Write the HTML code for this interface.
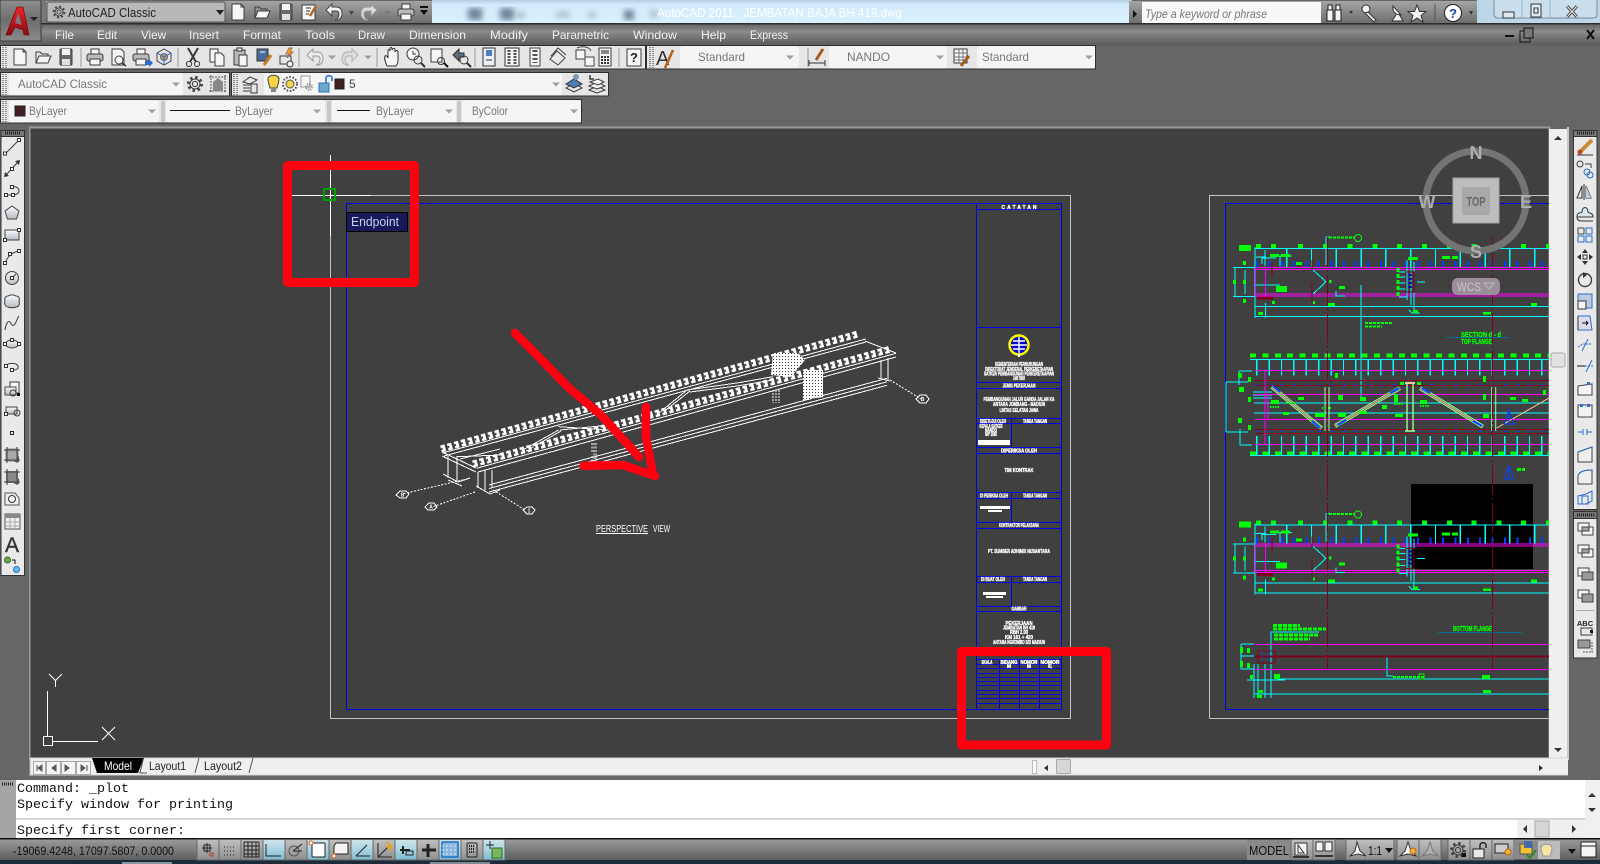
<!DOCTYPE html>
<html><head><meta charset="utf-8"><title>AutoCAD 2011</title>
<style>
html,body{margin:0;padding:0;background:#666;width:1600px;height:864px;overflow:hidden}
svg{display:block}
text{font-family:"Liberation Sans",sans-serif}
.m{fill:#f0f0f0;font-size:12px}
.g{fill:#777;font-size:12px}
.c{font-family:"Liberation Mono",monospace;font-size:13.33px;fill:#111}
.t{fill:#fff;font-size:5px;font-weight:bold;text-anchor:middle;stroke:#fff;stroke-width:.35}
.i{fill:none;stroke:#3c3c3c;stroke-width:1}
.f{fill:#f6f6f6}
.cy{stroke:#0ff;fill:none}.mg{stroke:#f0f;fill:none}.dr{stroke:#800020;fill:none}.gn{stroke:#0f0;fill:none}
.gf{fill:#0f0}
.w{stroke:#fff;fill:none}
.gt{fill:#0f0;font-size:7px;font-weight:bold;stroke:#0f0;stroke-width:.3}
</style></head><body>
<svg width="1600" height="864" viewBox="0 0 1600 864" xmlns="http://www.w3.org/2000/svg">
<defs>
<linearGradient id="gb" x1="0" y1="0" x2="0" y2="1"><stop offset="0" stop-color="#a4a4a4"/><stop offset="1" stop-color="#6e6e6e"/></linearGradient>
<linearGradient id="menu" x1="0" y1="0" x2="0" y2="1"><stop offset="0" stop-color="#666"/><stop offset=".35" stop-color="#8c8c8c"/><stop offset=".6" stop-color="#777"/><stop offset="1" stop-color="#5c5c5c"/></linearGradient>
<linearGradient id="tit" x1="0" y1="0" x2="0" y2="1"><stop offset="0" stop-color="#b4cde0"/><stop offset=".2" stop-color="#d2ebfb"/><stop offset="1" stop-color="#d9f1fd"/></linearGradient>
<linearGradient id="st" x1="0" y1="0" x2="0" y2="1"><stop offset="0" stop-color="#9a9a9a"/><stop offset="1" stop-color="#5e5e5e"/></linearGradient>
<linearGradient id="on" x1="0" y1="0" x2="0" y2="1"><stop offset="0" stop-color="#cfe3ea"/><stop offset=".5" stop-color="#a9d3e1"/><stop offset="1" stop-color="#7db9cf"/></linearGradient>
<linearGradient id="off" x1="0" y1="0" x2="0" y2="1"><stop offset="0" stop-color="#c0c0c0"/><stop offset="1" stop-color="#8e8e8e"/></linearGradient>
<linearGradient id="ab" x1="0" y1="0" x2="0" y2="1"><stop offset="0" stop-color="#8e8e8e"/><stop offset=".5" stop-color="#6e6e6e"/><stop offset="1" stop-color="#8a8a8a"/></linearGradient>
<linearGradient id="rd" x1="0" y1="0" x2="0" y2="1"><stop offset="0" stop-color="#e8242c"/><stop offset="1" stop-color="#8e0a12"/></linearGradient>
<linearGradient id="bx" x1="0" y1="0" x2="0" y2="1"><stop offset="0" stop-color="#fafafa"/><stop offset="1" stop-color="#b4bcc4"/></linearGradient>
<pattern id="dots" width="3" height="3" patternUnits="userSpaceOnUse"><rect width="3" height="3" fill="#fff"/><rect x="2" y="2" width="1" height="1" fill="#404040"/></pattern>
<filter id="bl"><feGaussianBlur stdDeviation="3"/></filter>
<g id="new"><path class="i f" d="M-6-8H3L6-5V8H-6Z"/><path class="i" d="M3-8V-5H6"/></g>
<g id="open"><path class="i" d="M-7 6V-5H-3L-1-3H5V-1"/><path class="i f" d="M-7 6L-4-1H8L5 6Z"/></g>
<g id="save"><rect class="i" x="-6" y="-8" width="12" height="16" rx="1" style="fill:#6a6a6a"/><rect x="-4" y="-8" width="8" height="6" fill="#f4f4f4"/><rect x="-4" y="2" width="8" height="6" fill="#e0e0e0"/></g>
<g id="prn"><path class="i f" d="M-4-3V-8H4V-3"/><rect class="i" x="-8" y="-3" width="16" height="7" rx="2" style="fill:#bbb"/><path class="i f" d="M-5 2H5V8H-5Z"/></g>
<g id="undo"><path d="M-8-2L-2-8V-5H2C7-5 8-1 8 2C8 5 6 7 4 8H1C4 7 5 5 5 2C5 0 4-1 2-1H-2V4Z" fill="#f4f4f4" stroke="#444"/></g>
<g id="redo"><path d="M8-2L2-8V-5H-2C-7-5-8-1-8 2C-8 5-6 7-4 8H-1C-4 7-5 5-5 2C-5 0-4-1-2-1H2V4Z" fill="#dcdcdc" stroke="#999"/></g>
<g id="gear"><circle r="6.5" fill="none" stroke="#444" stroke-width="3" stroke-dasharray="2.4 2.7"/><circle r="5" class="i"/><circle r="2.6" class="i"/></g>
<g id="dot"><rect x="-1.5" y="-1.5" width="3" height="3" fill="#fff" stroke="#333"/></g>
<path id="gdn" d="M-4-1.5H4L0 2.5Z" fill="#a0a0a0"/>
<g id="flange">
<path class="cy" d="M1255 248.5H1549M1255 306.5H1549M1255 316.5H1549M1233 267.5H1255M1233 296.5H1255M1235 267V297M1245 270V294M1255 247V318M1265.5 303V318M1254 285H1280"/>
<path class="cy" stroke-width="19" stroke-dasharray="1.4 23.4" d="M1286 258H1549"/>
<path class="cy" d="M1255 248V267M1265 250V266M1262 264V258H1276M1280 266V256M1287 266V256M1256 257H1266M1277 256H1292M1326 237V265M1326 237H1332"/>
<path class="gn" stroke-width="4" stroke-dasharray="5 19.8" d="M1298 246H1549"/>
<path class="gn" stroke-width="4" d="M1256 246H1261M1271 246H1276"/>
<path d="M1256 264H1549" stroke="#0040ff" stroke-width="6" stroke-dasharray="2 10.4" fill="none"/>
<path class="mg" d="M1255 267.5H1549M1255 269.5H1549M1255 294H1549M1255 296H1549M1255.5 267V297M1265.5 267V296"/>
<path class="cy" d="M1313 270L1326 281.7L1313 294M1336 291V296H1345M1407 260V300M1411 260V305M1414 262V310M1409 310L1412 313H1420M1399 297H1407M1399 272H1407M1399 277H1407M1399 283H1407M1399 289H1407M1417 282H1425"/>
<path class="dr" d="M1272 262V275M1312 260V270M1312 283V302M1406 272H1414V292H1406Z"/>
<path d="M1257 298H1273" stroke="#800020" stroke-width="3"/>
<path class="gn" stroke-width="3" stroke-dasharray="4 2" d="M1398 268V296"/>
<path d="M1410 274V290" stroke="#00c" stroke-width="3" stroke-dasharray="2 2"/>
<g class="gf"><rect x="1239" y="245" width="12" height="6"/><rect x="1276" y="286" width="11" height="6"/><rect x="1328" y="303" width="7" height="3"/><rect x="1531" y="303" width="6" height="3"/><rect x="1483" y="312" width="8" height="2.5"/><rect x="1258" y="312" width="5" height="3"/><rect x="1413" y="310" width="5" height="3"/><rect x="1233" y="280" width="3" height="4"/><rect x="1243" y="280" width="3" height="4"/><rect x="1243" y="261" width="3" height="4"/><rect x="1243" y="299" width="3" height="4"/><rect x="1329" y="280" width="2.5" height="3"/><rect x="1272" y="301" width="3" height="3"/><rect x="1313" y="301" width="2" height="3"/><rect x="1339" y="286" width="6" height="3"/><rect x="1408" y="257" width="10" height="3"/><rect x="1442" y="256" width="8" height="3"/><rect x="1452" y="256" width="6" height="3"/><rect x="1270" y="254" width="9" height="3"/><rect x="1281" y="254" width="9" height="3"/><rect x="1296" y="262" width="6" height="3"/></g>
</g>
</defs>

<rect width="1600" height="864" fill="#666"/>

<!-- title bar -->
<rect x="432" y="0" width="700" height="23" fill="url(#tit)"/>
<g filter="url(#bl)" fill="#6f8399">
<rect x="468" y="8" width="14" height="12"/><rect x="500" y="8" width="14" height="12"/><rect x="518" y="12" width="6" height="6" opacity=".6"/><rect x="556" y="12" width="14" height="5" opacity=".5"/><rect x="588" y="13" width="8" height="4" opacity=".6"/><rect x="624" y="10" width="10" height="10"/><rect x="650" y="10" width="8" height="8" opacity=".4"/>
</g>
<text x="657" y="17" fill="#fff" font-size="13" textLength="245" lengthAdjust="spacingAndGlyphs" xml:space="preserve">AutoCAD 2011   JEMBATAN BAJA BH 419.dwg</text>
<rect x="0" y="0" width="46" height="23" fill="#777"/>
<rect x="46" y="1" width="386" height="22" fill="url(#gb)"/>
<rect x="47" y="2" width="178" height="20" rx="2" fill="#b8b8b8" stroke="#555"/>
<use href="#gear" transform="translate(59 12) scale(.8)"/>
<text x="68" y="17" fill="#222" font-size="12.5" textLength="88" lengthAdjust="spacingAndGlyphs">AutoCAD Classic</text>
<path d="M216 10H224L220 15Z" fill="#222"/>
<use href="#new" x="238" y="12"/><use href="#open" x="262" y="12"/><use href="#save" x="286" y="12"/>
<g transform="translate(309 12)"><rect class="i f" x="-7" y="-7" width="13" height="15"/><path d="M-3-4H2M-3-1H1M-3 2H0" stroke="#333"/><path d="M1 4L7-6" stroke="#b5651d" stroke-width="2.4"/></g>
<use href="#undo" x="334" y="12"/><path d="M349 11H354L351.5 15Z" fill="#444"/>
<use href="#redo" x="369" y="12"/><path d="M385 11H390L387.5 15Z" fill="#777"/>
<use href="#prn" x="406" y="12"/>
<path d="M420 6H428V8H420ZM420 10H428L424 15Z" fill="#111"/>

<!-- search -->
<rect x="1129" y="1" width="348" height="22" fill="url(#gb)"/>
<path d="M1133 10L1137 14L1133 18Z" fill="#111"/>
<rect x="1142" y="2" width="179" height="21" fill="#f8f8f8"/>
<text x="1145" y="18" fill="#777" font-size="12" font-style="italic" textLength="122" lengthAdjust="spacingAndGlyphs">Type a keyword or phrase</text>
<g fill="#f4f4f4" stroke="#222"><rect x="1327" y="10" width="6" height="11"/><rect x="1335" y="10" width="6" height="11"/><rect x="1328" y="5" width="4" height="5"/><rect x="1336" y="5" width="4" height="5"/></g>
<path d="M1349 11H1353L1351 14Z" fill="#333"/>
<g fill="#f2f2f2" stroke="#333"><circle cx="1366" cy="9" r="4"/><path d="M1368 12L1376 20L1374 22L1365 13Z"/><path d="M1393 6C1392 12 1396 15 1401 15L1393 6ZM1396 15L1392 21H1403L1399 14"/><path d="M1417 5L1419.5 11.5L1426 11.5L1421 15.5L1423 22L1417 18L1411 22L1413 15.5L1408 11.5L1414.5 11.5Z"/></g>
<path d="M1435 4V22" stroke="#555"/>
<circle cx="1453" cy="13" r="8.5" fill="#fff" stroke="#222"/>
<text x="1453" y="18" text-anchor="middle" font-size="13" font-weight="bold" fill="#1a3fae">?</text>
<path d="M1469 11H1473L1471 15Z" fill="#333"/>
<!-- window buttons -->
<rect x="1477" y="0" width="123" height="23" fill="#bcd7e8"/>
<path d="M1494 0V14Q1494 18 1498 18H1593Q1597 18 1597 14V0" fill="#c9dfee" stroke="#7a8a9a"/>
<path d="M1522 0V18M1550 0V18" stroke="#9fb2c2"/>
<rect x="1503" y="12" width="11" height="6" fill="#dfeaf2" stroke="#333"/>
<rect x="1531" y="4" width="10" height="13" fill="#dfeaf2" stroke="#333"/><rect x="1534" y="8" width="4" height="5" fill="none" stroke="#333"/>
<path d="M1567 6L1577 17M1577 6L1567 17" stroke="#444" stroke-width="3"/><path d="M1567 6L1577 17M1577 6L1567 17" stroke="#eee" stroke-width="1"/>

<!-- menu bar -->
<rect x="0" y="23" width="1600" height="1.5" fill="#2d2d2d"/>
<rect x="0" y="24.5" width="1600" height="20.5" fill="url(#menu)"/>
<text class="m" x="55" y="39" textLength="19" lengthAdjust="spacingAndGlyphs">File</text>
<text class="m" x="97" y="39" textLength="20" lengthAdjust="spacingAndGlyphs">Edit</text>
<text class="m" x="141" y="39" textLength="25" lengthAdjust="spacingAndGlyphs">View</text>
<text class="m" x="189" y="39" textLength="30" lengthAdjust="spacingAndGlyphs">Insert</text>
<text class="m" x="243" y="39" textLength="38" lengthAdjust="spacingAndGlyphs">Format</text>
<text class="m" x="305" y="39" textLength="30" lengthAdjust="spacingAndGlyphs">Tools</text>
<text class="m" x="358" y="39" textLength="27" lengthAdjust="spacingAndGlyphs">Draw</text>
<text class="m" x="409" y="39" textLength="57" lengthAdjust="spacingAndGlyphs">Dimension</text>
<text class="m" x="490" y="39" textLength="38" lengthAdjust="spacingAndGlyphs">Modify</text>
<text class="m" x="552" y="39" textLength="57" lengthAdjust="spacingAndGlyphs">Parametric</text>
<text class="m" x="633" y="39" textLength="44" lengthAdjust="spacingAndGlyphs">Window</text>
<text class="m" x="701" y="39" textLength="25" lengthAdjust="spacingAndGlyphs">Help</text>
<text class="m" x="750" y="39" textLength="38" lengthAdjust="spacingAndGlyphs">Express</text>
<rect x="1505" y="35" width="9" height="2" fill="#111"/>
<rect x="1520" y="31" width="10" height="11" fill="none" stroke="#111"/><rect x="1524" y="28" width="9" height="10" fill="#777" stroke="#111"/>
<path d="M1587 30L1594 39M1594 30L1587 39" stroke="#111" stroke-width="2"/>

<!-- app button -->
<rect x="0" y="0" width="41" height="41" fill="url(#ab)" stroke="#3a3a3a"/>
<path d="M6 35L17 7H23L29 35H24L23 30L15 27L11 35Z" fill="url(#rd)" stroke="#6d0000" stroke-width=".6"/>
<path d="M18 13L22 25L15 23Z" fill="#7a7a7a"/>
<path d="M30 17H38L34 21Z" fill="#222"/>

<!-- toolbar row 1 -->
<rect x="0.5" y="45.5" width="645" height="23.5" fill="#e6e6e6" stroke="#2e2e2e"/>
<rect x="646.5" y="45.5" width="449" height="23.5" fill="#e6e6e6" stroke="#2e2e2e"/>
<path d="M3 47V68M6 47V68" stroke="#333" stroke-dasharray="1 1"/>
<path d="M650 47V68M653 47V68" stroke="#333" stroke-dasharray="1 1"/>
<use href="#new" x="20" y="57"/><use href="#open" x="43" y="57"/><use href="#save" x="66" y="57"/>
<path d="M81 48V67M178 48V67M299 48V67M377 48V67M475 48V67M619 48V67M808 48V67" stroke="#999"/>
<use href="#prn" x="95" y="57"/>
<g transform="translate(118 57)"><path class="i f" d="M-6-8H3L6-5V8H-6Z"/><circle class="i" cx="1" cy="3" r="4"/><path d="M4 6L8 9" stroke="#333" stroke-width="1.6"/></g>
<g transform="translate(141 57)"><use href="#prn"/><path d="M4 4H8V2L12 6L8 10V8H4Z" fill="#2a6fcb"/></g>
<g transform="translate(164 57)"><path d="M0-8L7-4V4L0 8L-7 4V-4Z" fill="#e8e8e8" stroke="#444"/><circle r="3.5" fill="#e98c2a" stroke="#2a6fcb"/><path d="M-7-4L0 0L7-4M0 0V8" stroke="#2a6fcb" fill="none"/></g>
<g transform="translate(193 57)" class="i"><path d="M-5-9L3 5M5-9L-3 5" stroke-width="2"/><circle cx="-4" cy="7" r="2.6"/><circle cx="4" cy="7" r="2.6"/></g>
<g transform="translate(217 57)"><path class="i f" d="M-7-8H1V5H-7Z"/><path class="i f" d="M-2-4H4L7-1V9H-2Z"/></g>
<g transform="translate(240 57)"><rect class="i" x="-6" y="-7" width="11" height="15" style="fill:#bbb"/><rect x="-3" y="-9" width="5" height="3" fill="#eee" stroke="#333"/><rect class="i f" x="-1" y="-2" width="8" height="11"/></g>
<g transform="translate(264 57)"><rect x="-7" y="-8" width="11" height="12" fill="#4a6d9c" stroke="#333"/><path d="M-4-5H1" stroke="#fff"/><path d="M0 8L7-2" stroke="#c87a20" stroke-width="3"/></g>
<g transform="translate(287 57)"><rect class="i" x="-7" y="-1" width="11" height="8"/><path d="M2-9L-1-3H2L0 1L6-5H3L5-9Z" fill="#f4b400" stroke="#a66"/><circle class="i" cx="3" cy="7" r="3" style="fill:#eee"/></g>
<use href="#undo" x="315" y="57" opacity=".45"/><use href="#gdn" x="332" y="57"/><use href="#redo" x="350" y="57" opacity=".7"/><use href="#gdn" x="368" y="57"/>
<g transform="translate(392 57)"><path d="M-5 9C-7 4-8 1-7-1C-6-2-5-1-4 1V-6C-4-8-2-8-2-6V-8C-2-10 0-10 0-8V-7C1-9 3-9 3-7V-5C4-7 6-7 6-5V3C6 6 5 8 4 9Z" fill="#f6f6f6" stroke="#333"/></g>
<g transform="translate(415 57)"><circle class="i" cx="-2" cy="-3" r="6" style="fill:#f6f6f6"/><path d="M-2-6V-3H1" stroke="#333" fill="none"/><circle class="i" cx="3" cy="3" r="4"/><path d="M6 6L10 10" stroke="#333" stroke-width="2"/></g>
<g transform="translate(438 57)"><rect class="i f" x="-7" y="-8" width="11" height="13"/><circle class="i" cx="3" cy="4" r="3.5"/><path d="M6 6L10 10" stroke="#111" stroke-width="2"/></g>
<g transform="translate(461 57)"><path d="M-8-2L-2-8V-4H3V0H-2V4Z" fill="#5a6f86" stroke="#333"/><circle class="i" cx="3" cy="3" r="4"/><path d="M6 6L10 10" stroke="#333" stroke-width="2"/></g>
<g transform="translate(489 57)"><rect x="-6" y="-9" width="12" height="18" fill="#e8f0f6" stroke="#333"/><rect x="-3" y="-7" width="6" height="6" fill="#4f7dbb"/><path d="M-3 3H3" stroke="#333"/></g>
<g transform="translate(512 57)"><rect x="-7" y="-9" width="14" height="18" fill="#f4f4f4" stroke="#333"/><path d="M-3-7V7M3-7V7" stroke="#555" stroke-width="3" stroke-dasharray="2 1"/></g>
<g transform="translate(535 57)"><rect x="-5" y="-9" width="10" height="18" fill="#f4f4f4" stroke="#444"/><path d="M0-7V6" stroke="#555" stroke-width="5" stroke-dasharray="2 2"/></g>
<g transform="translate(558 57)"><path d="M-8 2L-1-6L7 1L0 8Z" fill="#e8e8e8" stroke="#444"/><path d="M-7-1L0-9L8-2" fill="none" stroke="#444"/></g>
<g transform="translate(585 57)"><rect class="i f" x="-9" y="-7" width="9" height="9"/><rect x="0" y="0" width="9" height="9" fill="#f4f4f4" stroke="#444"/><path d="M-8-9C-4-11 4-11 6-6" stroke="#444" fill="none"/></g>
<g transform="translate(605 57)"><rect class="i f" x="-6" y="-9" width="12" height="18"/><rect x="-4" y="-7" width="8" height="4" fill="#888"/><path d="M-4 0H4M-4 3H4M-4 6H4" stroke="#333" stroke-dasharray="2 1" stroke-width="2"/></g>
<rect class="i f" x="627" y="49" width="14" height="17"/><text x="634" y="62" text-anchor="middle" font-size="13" font-weight="bold" fill="#222">?</text>
<text x="656" y="65" font-size="20" fill="#333">A</text><path d="M665 68L673 50" stroke="#b5651d" stroke-width="2.6"/>
<rect x="680" y="46" width="119" height="22.5" rx="3" fill="#f5f5f5"/><text class="g" x="698" y="61" textLength="47" lengthAdjust="spacingAndGlyphs">Standard</text><use href="#gdn" x="790" y="57"/>
<g transform="translate(817 57)"><path d="M-8 6H8M-8 3V9M8 3V9" stroke="#333" fill="none"/><path d="M-1 3L6-8" stroke="#a55a1c" stroke-width="3"/></g>
<rect x="829" y="46" width="118" height="22.5" rx="3" fill="#f5f5f5"/><text class="g" x="847" y="61" textLength="43" lengthAdjust="spacingAndGlyphs">NANDO</text><use href="#gdn" x="940" y="57"/>
<g transform="translate(962 57)"><rect class="i f" x="-8" y="-8" width="13" height="14"/><path d="M-8-4H5M-8 0H5M-8 3H5M-3-8V6M1-8V6" stroke="#777"/><path d="M-1 9L7-1" stroke="#a55a1c" stroke-width="3"/></g>
<rect x="977" y="46" width="118" height="22.5" rx="3" fill="#f5f5f5"/><text class="g" x="982" y="61" textLength="47" lengthAdjust="spacingAndGlyphs">Standard</text><use href="#gdn" x="1089" y="57"/>

<!-- toolbar row 2 -->
<rect x="0.5" y="72.5" width="229" height="23.5" fill="#e6e6e6" stroke="#2e2e2e"/>
<path d="M3 74V95M6 74V95" stroke="#333" stroke-dasharray="1 1"/>
<rect x="9" y="73" width="174" height="22.5" rx="3" fill="#f5f5f5"/><text class="g" x="18" y="88" textLength="89" lengthAdjust="spacingAndGlyphs">AutoCAD Classic</text><use href="#gdn" x="176" y="84"/>
<use href="#gear" x="195" y="84"/>
<g transform="translate(218 84)"><path d="M-7-9V9M7-9V9M-9-7H9M-9 7H9" stroke="#555" stroke-dasharray="2 1"/><path d="M-5 7V-2L0-6L5-2V7Z" fill="#888"/></g>
<rect x="231.5" y="72.5" width="377" height="23.5" fill="#e6e6e6" stroke="#2e2e2e"/>
<path d="M234 74V95M237 74V95" stroke="#333" stroke-dasharray="1 1"/>
<g transform="translate(250 84)" class="i"><path d="M-7-2L0-7L7-4L0 0Z"/><path d="M-7 1H0M-7 4H0M-7 7H0"/><rect x="1" y="0" width="6" height="9"/></g>
<rect x="264" y="73" width="298" height="22.5" rx="3" fill="#f5f5f5"/>
<path d="M270 88C269 84 268 82 268 79C268 74 279 74 279 79C279 82 278 84 277 88Z" fill="#f5d547" stroke="#444"/><rect x="271" y="88" width="5" height="4" fill="#888"/>
<circle cx="290" cy="84" r="4" fill="#f5d547" stroke="#555"/><circle cx="290" cy="84" r="7" fill="none" stroke="#555" stroke-width="2" stroke-dasharray="1.6 1.6"/>
<rect x="301" y="76" width="9" height="11" fill="none" stroke="#999"/><use href="#gear" transform="translate(309 87) scale(.5)" opacity=".5"/>
<rect x="319" y="83" width="10" height="9" fill="#6ea9cc" stroke="#2a6fcb"/><path d="M326 83V78C326 75 332 75 332 78V81" stroke="#2a6fcb" stroke-width="1.6" fill="none"/>
<rect x="335" y="79" width="9" height="10" fill="#3f1f22" stroke="#222"/>
<text x="349" y="88" fill="#444" font-size="12">5</text><use href="#gdn" x="556" y="84"/>
<g transform="translate(574 84)"><path d="M-8 4L0-1L8 4L0 8Z" fill="#e8e8e8" stroke="#333"/><path d="M-8 0L0-5L8 0L0 4Z" fill="#4f7dbb" stroke="#333"/><circle cx="2" cy="-7" r="3" fill="#79b"/></g>
<g transform="translate(597 84)" class="i"><path d="M-8 6L0 2L8 6L0 9Z"/><path d="M-8 2L0-2L8 2L0 5Z" style="fill:#f4f4f4"/><path d="M-7-2L1-5L7-2L1 1Z" style="fill:#f4f4f4"/><path d="M-7-9V-5H-3" stroke-width="1.5"/></g>

<!-- toolbar row 3 -->
<rect x="0.5" y="99.5" width="581" height="23.5" fill="#e6e6e6" stroke="#2e2e2e"/>
<path d="M3 101V122M6 101V122" stroke="#333" stroke-dasharray="1 1"/>
<rect x="9" y="100" width="150" height="22.5" rx="3" fill="#f5f5f5"/><rect x="15" y="106" width="10" height="10" fill="#3f1f22" stroke="#222"/><text class="g" x="29" y="115" textLength="38" lengthAdjust="spacingAndGlyphs">ByLayer</text><use href="#gdn" x="152" y="111"/>
<path d="M162 101V122M164 101V122" stroke="#aaa"/>
<rect x="166" y="100" width="159" height="22.5" rx="3" fill="#f5f5f5"/><path d="M170 110.5H230" stroke="#111"/><text class="g" x="235" y="115" textLength="38" lengthAdjust="spacingAndGlyphs">ByLayer</text><use href="#gdn" x="317" y="111"/>
<path d="M328 101V122M330 101V122" stroke="#aaa"/>
<rect x="332" y="100" width="124" height="22.5" rx="3" fill="#f5f5f5"/><path d="M337 110.5H370" stroke="#111"/><text class="g" x="376" y="115" textLength="38" lengthAdjust="spacingAndGlyphs">ByLayer</text><use href="#gdn" x="449" y="111"/>
<path d="M458 101V122M460 101V122" stroke="#aaa"/>
<rect x="462" y="100" width="119" height="22.5" rx="3" fill="#f5f5f5"/><text class="g" x="472" y="115" textLength="36" lengthAdjust="spacingAndGlyphs">ByColor</text><use href="#gdn" x="574" y="111"/>

<!-- viewport -->
<rect x="29.5" y="127.5" width="1520" height="632" fill="#404040" stroke="#9a9a9a" stroke-width="2"/>
<rect x="0" y="127" width="29" height="649" fill="#666"/>

<!-- paper 1 -->
<rect x="330.5" y="195.5" width="740" height="523" fill="none" stroke="#c4c4c4" stroke-width="1"/>
<rect x="346.5" y="203.5" width="715" height="506" fill="none" stroke="#0000e8" stroke-width="1"/>
<path d="M330.5 155V236M292 195.5H371" stroke="#fff"/>
<rect x="324" y="189" width="11" height="11" fill="none" stroke="#00a000" stroke-width="2"/>

<!-- title block -->
<g fill="none" stroke="#0000e8" stroke-width="1">
<rect x="976.5" y="203.5" width="85" height="506"/>
<path d="M976 209.5H1062M976 327.5H1062M976 382.5H1062M976 388.5H1062M976 418.5H1062M976 423.5H1062M976 447.5H1062M976 453.5H1062M976 492.5H1062M976 498.5H1062M976 522.5H1062M976 528.5H1062M976 576.5H1062M976 582.5H1062M976 606.5H1062M976 611.5H1062M976 659.5H1062M976 664.5H1062M976 668.5H1062M976 673.5H1062M976 677.5H1062M976 681.5H1062M976 685.5H1062M976 690.5H1062M976 694.5H1062M976 698.5H1062M976 703.5H1062"/>
<path d="M1011.5 418V448M1011.5 492V523M1011.5 576V607M999.5 659V709M1019.5 659V709M1039.5 659V709"/>
</g>
<circle cx="1019" cy="345" r="9.5" fill="#0000c8" stroke="#ff0" stroke-width="2.5"/>
<path d="M1011 345H1027M1019 337V353M1013 341H1025M1013 349H1025" stroke="#fff" stroke-width="1.4"/>
<path d="M1019 354V357" stroke="#fff" stroke-width="2"/>
<text class="t" x="1019" y="209" textLength="35" lengthAdjust="spacing" font-size="6">CATATAN</text>
<text class="t" x="1019" y="366" textLength="48" lengthAdjust="spacingAndGlyphs">KEMENTERIAN PERHUBUNGAN</text>
<text class="t" x="1019" y="371" textLength="68" lengthAdjust="spacingAndGlyphs">DIREKTORAT JENDERAL PERKERETAAPIAN</text>
<text class="t" x="1019" y="375.5" textLength="70" lengthAdjust="spacingAndGlyphs" font-size="6">SATKER PEMBANGUNAN PERKERETAAPIAN</text>
<text class="t" x="1019" y="380" textLength="12" lengthAdjust="spacingAndGlyphs" font-size="4">JAWA TIMUR</text>
<text class="t" x="1019" y="387.5" textLength="33" lengthAdjust="spacingAndGlyphs">JENIS PEKERJAAN</text>
<text class="t" x="1019" y="401" textLength="71" lengthAdjust="spacingAndGlyphs" font-size="6">PEMBANGUNAN JALUR GANDA JALAN KA</text>
<text class="t" x="1019" y="406" textLength="52" lengthAdjust="spacingAndGlyphs" font-size="6">ANTARA JOMBANG - MADIUN</text>
<text class="t" x="1019" y="412" textLength="39" lengthAdjust="spacingAndGlyphs" font-size="6">LINTAS SELATAN JAWA</text>
<text class="t" x="993" y="423" textLength="26" lengthAdjust="spacingAndGlyphs">DISETUJUI OLEH</text>
<text class="t" x="1035" y="423" textLength="24" lengthAdjust="spacingAndGlyphs">TANDA TANGAN</text>
<text class="t" x="991" y="428" textLength="23" lengthAdjust="spacingAndGlyphs">KEPALA SATKER</text>
<text class="t" x="991" y="432" textLength="12" lengthAdjust="spacingAndGlyphs">NANDO</text>
<text class="t" x="991" y="436" textLength="12" lengthAdjust="spacingAndGlyphs">NIP 1960</text>
<rect x="978" y="440" width="32" height="5" fill="#fff"/>
<text class="t" x="1019" y="452.5" textLength="36" lengthAdjust="spacingAndGlyphs">DIPERIKSA OLEH</text>
<text class="t" x="1019" y="472" textLength="29" lengthAdjust="spacingAndGlyphs" font-size="6">TIM KONTRAK</text>
<text class="t" x="994" y="497.5" textLength="28" lengthAdjust="spacingAndGlyphs">DI PERIKSA OLEH</text>
<text class="t" x="1035" y="497.5" textLength="24" lengthAdjust="spacingAndGlyphs">TANDA TANGAN</text>
<rect x="980" y="506" width="30" height="3" fill="#fff"/><rect x="988" y="510" width="14" height="2" fill="#fff"/>
<text class="t" x="1019" y="527" textLength="40" lengthAdjust="spacingAndGlyphs" font-size="4.5">KONTRAKTOR PELAKSANA</text>
<text class="t" x="1019" y="553" textLength="62" lengthAdjust="spacingAndGlyphs" font-size="6">PT. SUMBER ADHIMIX NUSANTARA</text>
<text class="t" x="993" y="581" textLength="24" lengthAdjust="spacingAndGlyphs" font-size="4.5">DI BUAT OLEH</text>
<text class="t" x="1035" y="581" textLength="24" lengthAdjust="spacingAndGlyphs" font-size="4.5">TANDA TANGAN</text>
<rect x="983" y="592" width="23" height="3" fill="#fff"/><rect x="986" y="596" width="17" height="2" fill="#fff"/>
<text class="t" x="1019" y="610.5" textLength="15" lengthAdjust="spacingAndGlyphs">GAMBAR</text>
<text class="t" x="1019" y="625" textLength="27" lengthAdjust="spacingAndGlyphs">PEKERJAAN</text>
<text class="t" x="1019" y="629.5" textLength="32" lengthAdjust="spacingAndGlyphs">JEMBATAN BH 419</text>
<text class="t" x="1019" y="634" textLength="18" lengthAdjust="spacingAndGlyphs">RBH 2.03</text>
<text class="t" x="1019" y="639" textLength="28" lengthAdjust="spacingAndGlyphs">KM 161 + 420</text>
<text class="t" x="1019" y="644" textLength="52" lengthAdjust="spacingAndGlyphs">ANTARA NGROMBO S/D MADIUN</text>
<text class="t" x="987" y="664" textLength="11" lengthAdjust="spacingAndGlyphs">SKALA</text>
<text class="t" x="1009" y="664" textLength="17" lengthAdjust="spacingAndGlyphs">BIDANG</text>
<text class="t" x="1029" y="664" textLength="17" lengthAdjust="spacingAndGlyphs">NOMOR</text>
<text class="t" x="1050" y="664" textLength="19" lengthAdjust="spacingAndGlyphs">NOMOR</text>
<text class="t" x="1009" y="668" textLength="4" lengthAdjust="spacingAndGlyphs" font-size="4">M</text>
<text class="t" x="1029" y="668" textLength="4" lengthAdjust="spacingAndGlyphs" font-size="4">M</text>
<text class="t" x="1050" y="668" textLength="4" lengthAdjust="spacingAndGlyphs" font-size="4">01</text>

<!-- bridge -->
<g class="w" stroke-width="1" shape-rendering="crispEdges">
<path d="M442.5 453L865.7 339M476.4 468.3L896 353.3M444 456L866 342M478 472L896 357"/>
<path d="M489 485L887 378.3M489 488.5L887 381.8M489 492L887 385.3"/>
<path d="M442 452L476 468M865 341L896 353M442 456L476 472"/>
<path d="M448 456V478M457 456V482M478 472V488M485 470V490M492 470V487M881 360V378M888 358V380"/>
<path d="M443 474L458 482L470 478M476 486L490 494L500 490M448 480L462 486M878 378L890 381"/>
<path d="M467 479L402 494" stroke-dasharray="2 1.5"/>
<path d="M475 492L432 507" stroke-dasharray="2 1.5"/>
<path d="M493 490L525 510" stroke-dasharray="2 1.5"/>
<path d="M890 380L921 399" stroke-dasharray="2 1.5"/>
<path d="M456.8 456.7L501.4 455M460 459L500 449M522.9 450L558.6 430M526 451L561 431M558.6 426.7L608.6 430M560 430L610 425M658.6 413.3L687 390M662 413L690 391M687 390L737 383M690 392L737 386M737 383L772.9 376.7M737 386L773 380"/>
<path d="M592 443V452M592 456V465M594 443V465M596 443V465" stroke-dasharray="2 1.5"/>
<path d="M773 390V403M776 390V403M779 390V403" stroke-dasharray="2 1"/>
<path d="M396 495L400 491H406L409 494L406 498H400ZM425 507L429 503H434L437 507L434 510H428ZM523 510L527 507H532L535 510L532 514H527ZM916 399L920 395H926L929 399L926 403H920Z"/>
</g>
<path d="M441 449L858 334" fill="none" stroke="#fff" stroke-width="7" stroke-dasharray="4.5 2.5"/>
<path d="M441 449L858 334" fill="none" stroke="#404040" stroke-width="2" stroke-dasharray="1.6 5.4"/>
<path d="M473 464L891 349" fill="none" stroke="#fff" stroke-width="7" stroke-dasharray="4.5 2.5"/>
<path d="M473 464L891 349" fill="none" stroke="#404040" stroke-width="2" stroke-dasharray="1.6 5.4"/>
<path d="M771 375L773 353L798 353L805 360L791 377Z" fill="url(#dots)"/>
<path d="M803 370L823 370L823 397L803 400Z" fill="url(#dots)"/>
<g fill="#fff" font-size="5" font-weight="bold" text-anchor="middle">
<text x="402.5" y="496.5">B</text><text x="431" y="508.5">A</text><text x="529" y="512.5">1</text><text x="922.5" y="401">B</text>
</g>
<text x="596" y="532" fill="#fff" font-size="10" textLength="52" lengthAdjust="spacingAndGlyphs">PERSPECTIVE</text>
<text x="653" y="532" fill="#fff" font-size="10" textLength="17" lengthAdjust="spacingAndGlyphs">VIEW</text>
<path d="M596 533.5H648" stroke="#fff"/>

<!-- paper 2 -->
<clipPath id="cp"><rect x="1100" y="130" width="449" height="628"/></clipPath>
<g clip-path="url(#cp)" shape-rendering="crispEdges">
<path d="M1209.5 718.5V195.5H1549M1209.5 718.5H1549" stroke="#c4c4c4" fill="none"/>
<path d="M1225.5 709.5V203.5H1549M1225.5 709.5H1549" stroke="#0000e8" fill="none"/>
<rect x="1411" y="484" width="122" height="85" fill="#000"/>
<use href="#flange"/>
<use href="#flange" y="276.5"/>
<path class="cy" d="M1361 285V400"/>
<path class="gn" stroke-width="2" stroke-dasharray="3 1" d="M1329 237.5H1355M1365 323H1392M1365 326.5H1382"/>
<circle cx="1358" cy="238" r="3.5" fill="none" stroke="#0f0"/>
<path class="gn" stroke-width="2" d="M1329 514H1355" stroke-dasharray="3 1"/>
<circle cx="1358" cy="514.5" r="3.5" fill="none" stroke="#0f0"/>
<text class="gt" x="1461" y="337" textLength="40" lengthAdjust="spacingAndGlyphs">SECTION d - d</text>
<path d="M1446 337.5H1510" stroke="#007090"/>
<text class="gt" x="1461" y="344" textLength="31" lengthAdjust="spacingAndGlyphs">TOP FLANGE</text>

<!-- truss section -->
<path class="gn" stroke-width="4" stroke-dasharray="6 6.4" d="M1250 355.5H1549"/>
<path class="gn" stroke-width="4" stroke-dasharray="6 6.4" d="M1250 453.5H1549"/>
<path class="cy" d="M1250 359.5H1549M1254 403H1549M1254 413H1549M1250 455.5H1549M1226 382H1248M1226 432H1248M1226 382V432M1239 371V385M1240 429V445M1239 371H1252M1240 445H1252M1253 395H1272M1253 398H1272M1253 392H1272"/>
<path class="cy" stroke-width="16" stroke-dasharray="1.4 11" d="M1256 367.5H1549"/>
<path class="cy" stroke-width="19" stroke-dasharray="1.4 11" d="M1256 445.5H1549"/>
<path class="mg" d="M1255 370.5H1549M1255 394.5H1549M1255 419.5H1549M1255 444.5H1549M1265 370V444M1268 395V420"/>
<path d="M1255 380.5H1549M1255 385.5H1549M1255 429.5H1549M1255 433.5H1549" stroke="#800020" fill="none"/>
<path d="M1256 384.5H1549M1256 431.5H1549" stroke="#0040ff" stroke-dasharray="3 9.4" fill="none"/>
<g fill="none" shape-rendering="auto">
<path d="M1271.7 386.7L1321.7 428.3M1335 426L1400 388M1420 388L1483 426.7" stroke="#9f9" stroke-width="4"/>
<path d="M1271.7 386.7L1321.7 428.3M1335 426L1400 388M1420 388L1483 426.7" stroke="#404040" stroke-width="2"/>
<path d="M1271.7 386.7L1321.7 428.3M1335 426L1400 388M1420 388L1483 426.7M1496.7 428L1549 398" stroke="#fc9" stroke-width="1"/>
<path d="M1273 386L1280 392M1312 421L1320 428M1338 425L1346 420M1390 393L1399 388M1422 388L1430 393M1473 421L1482 426" stroke="#04f" stroke-width="2"/>
<path d="M1325 387V431M1329 387V431M1491.7 387V431M1495.7 387V431" stroke="#9f9"/>
<path d="M1407 383V431M1413 383V431M1405 383H1415M1405 431H1415" stroke="#9f9" stroke-width="1.4"/>
<path d="M1405 383H1415" stroke="#fc9" stroke-width="2"/>
</g>
<path d="M1509 410L1514 424H1504Z" fill="none" stroke="#04f"/><path d="M1509 410V424" stroke="#04f"/>
<g class="gf"><rect x="1238" y="373" width="4" height="5"/><rect x="1248" y="377" width="3" height="5"/><rect x="1239" y="387" width="5" height="5"/><rect x="1248" y="397" width="3" height="5"/><rect x="1238" y="418" width="4" height="5"/><rect x="1248" y="425" width="3" height="5"/><rect x="1335" y="373" width="3" height="5"/><rect x="1338" y="395" width="5" height="5"/><rect x="1315" y="413" width="10" height="4"/><rect x="1338" y="413" width="8" height="4"/><rect x="1360" y="397" width="6" height="4"/><rect x="1382" y="405" width="5" height="4"/><rect x="1400" y="382" width="4" height="3"/><rect x="1417" y="382" width="4" height="3"/><rect x="1394" y="394" width="4" height="8"/><rect x="1483" y="376" width="3" height="6"/><rect x="1483" y="394" width="3" height="6"/><rect x="1483" y="414" width="6" height="4"/><rect x="1510" y="397" width="6" height="3"/><rect x="1522" y="399" width="6" height="3"/><rect x="1543" y="390" width="3" height="5"/><rect x="1271" y="400" width="8" height="4"/><rect x="1298" y="397" width="6" height="3"/><rect x="1283" y="412" width="6" height="3"/><rect x="1359" y="411" width="8" height="3"/><rect x="1395" y="414" width="8" height="3"/><rect x="1420" y="400" width="7" height="4"/></g>
<g stroke="#0f0" fill="none" stroke-dasharray="1.5 1" stroke-width="2"><path d="M1270 407H1280M1286 403H1296M1322 408H1332M1394 404H1404M1420 406H1430"/></g>

<path d="M1509 466L1514 479H1504Z" fill="none" stroke="#04f"/><path d="M1509 466V479" stroke="#04f"/>
<rect x="1517" y="468" width="4" height="3" fill="#0f0"/><rect x="1522" y="468" width="3" height="3" fill="#0f0"/>

<!-- section 4 -->
<path class="gn" stroke-width="3" stroke-dasharray="4 1" d="M1273 625.5H1300M1273 629H1326M1274 635H1319M1274 639H1310"/>
<path class="cy" d="M1271 663V632H1319M1241 644H1254M1241 669H1254M1241 644V669M1241 656H1254M1247 680H1285M1255 694H1549M1277 679H1549M1254 664V698M1258 664V698M1265 664V698M1271 664V698M1387 657V676H1393"/>
<path class="mg" d="M1255 644.5H1549M1255 669.5H1549"/>
<path d="M1255 656.5H1549" stroke="#800020" stroke-width="2" fill="none"/>
<rect x="1258" y="651" width="17" height="12" fill="none" stroke="#800020"/>
<path d="M1262 651V663M1268 651V663" stroke="#04f" stroke-dasharray="2 2"/>
<g class="gf"><rect x="1240" y="647" width="3" height="6"/><rect x="1247" y="648" width="3" height="5"/><rect x="1240" y="661" width="3" height="6"/><rect x="1247" y="663" width="3" height="5"/><rect x="1274" y="674" width="6" height="5"/><rect x="1250" y="675" width="3" height="4"/><rect x="1482" y="675" width="8" height="4"/><rect x="1483" y="690" width="8" height="3"/><rect x="1258" y="690" width="5" height="3"/><rect x="1257" y="695" width="5" height="3"/></g>
<path class="gn" stroke-width="2" stroke-dasharray="3 1" d="M1393 677H1424"/><rect x="1419" y="674" width="5" height="5" fill="none" stroke="#0f0"/>
<text class="gt" x="1453" y="631" textLength="39" lengthAdjust="spacingAndGlyphs">BOTTOM FLANGE</text>
<path d="M1438 632.5H1522" stroke="#007090"/>

<!-- axis dash -->
<path d="M1327.5 237V669M1492.5 237V669" stroke="#800020" stroke-width="1" stroke-dasharray="30 3 2 3" fill="none"/>
</g>

<!-- view cube -->
<g>
<circle cx="1476" cy="201" r="50" fill="none" stroke="#747474" stroke-width="7"/>
<rect x="1453" y="178" width="46" height="45" fill="#bdbdbd" stroke="#a4a4a4"/>
<rect x="1462" y="187" width="28" height="28" fill="#a8a8a8"/>
<text x="1476" y="206" text-anchor="middle" font-size="13" font-weight="bold" fill="#666" textLength="19" lengthAdjust="spacingAndGlyphs">TOP</text>
<g font-size="18" font-weight="bold" fill="#aeaeae" text-anchor="middle">
<text x="1476" y="159">N</text><text x="1476" y="258">S</text><text x="1526" y="208">E</text><text x="1427" y="208">W</text>
</g>
<rect x="1452" y="278" width="48" height="17" rx="6" fill="#9a8f9a"/>
<text x="1457" y="291" fill="#c8c8c8" font-size="12" textLength="24" lengthAdjust="spacingAndGlyphs">WCS</text>
<path d="M1484 283H1494L1489 289Z" fill="none" stroke="#bbb"/>
</g>

<!-- UCS -->
<g stroke="#fff" fill="none">
<path d="M47.5 691V736M53 741.5H98"/><rect x="43.5" y="736.5" width="9" height="9"/>
<path d="M49 674L55.5 680.5L62 674M55.5 680.5V687M102 727L115 740M115 727L102 740"/>
</g>

<!-- red marks -->
<g fill="none" stroke="#ff0010" stroke-width="9" stroke-linejoin="round">
<rect x="287.5" y="165.5" width="127" height="117"/>
<rect x="961.5" y="651.5" width="145" height="93.5"/>
</g>
<g fill="none" stroke="#ff0010" stroke-width="8.5" stroke-linecap="round" stroke-linejoin="round">
<path d="M515 333L533.6 351.7L569 388L601 415L639 457"/>
<path d="M646 407L646 437L653 475"/>
<path d="M583.6 465.7L623 465L655 476"/>
</g>

<!-- tooltip -->
<rect x="346.5" y="212.5" width="61" height="19" fill="#191959" stroke="#000"/>
<text x="351" y="226" fill="#c3d0ee" font-size="13" textLength="48" lengthAdjust="spacingAndGlyphs">Endpoint</text>

<!-- scrollbar right -->
<rect x="1549" y="129" width="18" height="631" fill="#efefef"/>
<rect x="1567" y="127" width="2" height="633" fill="#c8c8c8"/>
<path d="M1554 140H1562L1558 136Z" fill="#333"/><path d="M1554 748H1562L1558 752Z" fill="#333"/>
<rect x="1551" y="353" width="14" height="14" rx="2" fill="#e2e2e2" stroke="#aaa"/>

<!-- left toolbar -->
<rect x="1" y="130.5" width="23.5" height="445" fill="#e9e9e9" stroke="#333"/>
<rect x="1" y="130.5" width="23.5" height="6" fill="#777" stroke="#333"/>
<path d="M5 133H21" stroke="#222" stroke-width="3" stroke-dasharray="1 1"/>
<g transform="translate(12 0)">
<path class="i" d="M-6 153L7 140"/><use href="#dot" x="-7" y="153.5"/><use href="#dot" x="7" y="140"/>
<path class="i" d="M-6 175L6 162"/><path d="M-8 177L-7 172L-3 176ZM8 160L3 161L7 165Z" fill="#333"/><use href="#dot" x="0" y="169"/>
<path class="i" d="M-7 195H0C3 195 7 194 7 191C7 187 2 186 0 187"/><use href="#dot" x="-6" y="195"/><use href="#dot" x="1" y="195"/><use href="#dot" x="0" y="187"/>
<path d="M0 206L7 211L4.5 219H-4.5L-7 211Z" fill="url(#bx)" stroke="#444"/>
<rect x="-7" y="230" width="14" height="10" fill="url(#bx)" stroke="#444"/><use href="#dot" x="-7" y="240"/><use href="#dot" x="7" y="230"/>
<path class="i" d="M-7 264C-5 256 1 252 7 251"/><use href="#dot" x="-7" y="263"/><use href="#dot" x="-2" y="254"/><use href="#dot" x="7" y="251"/>
<circle cy="278" r="6.5" fill="url(#bx)" stroke="#444"/><path class="i" d="M0 278L4 274"/><use href="#dot" x="0" y="278"/>
<path d="M-4 296C-1 294 2 295 4 296C7 296 8 299 7 301C8 304 7 307 4 307C2 308-2 308-4 307C-7 307-8 303-7 301C-8 298-6 296-4 296Z" fill="url(#bx)" stroke="#444"/>
<path class="i" d="M-7 330C-6 324-4 320-2 322C0 325 1 327 3 324C5 320 6 317 7 316"/>
<ellipse cy="344" rx="6.5" ry="4" fill="url(#bx)" stroke="#444"/><use href="#dot" x="-7" y="344"/><use href="#dot" x="7" y="344"/><use href="#dot" x="0" y="340"/>
<path class="i" d="M-6 366C-5 363 4 362 6 366C7 369 4 370 1 370"/><use href="#dot" x="-6" y="366"/><use href="#dot" x="0" y="370"/>
<rect class="i f" x="-2" y="382" width="9" height="11"/><rect x="-7" y="387" width="11" height="8" fill="url(#bx)" stroke="#444"/><circle cx="1" cy="393" r="3" class="i"/><rect x="5" y="393" width="3" height="3" fill="#111"/>
<rect x="-6" y="407" width="11" height="7" fill="url(#bx)" stroke="#444"/><circle cx="5" cy="413" r="3" class="i"/><use href="#dot" x="-6" y="414"/>
<rect x="-1.5" y="431.5" width="3" height="3" fill="#eee" stroke="#222"/>
<rect x="-6" y="449" width="12" height="12" fill="#aaa" stroke="#888"/><path class="i" d="M-8 450H8M-8 460H8M-5 447V463M5 447V463"/><path d="M2 462L7 456V462Z" fill="#555"/>
<rect x="-6" y="471" width="12" height="12" style="fill:#888"/><path class="i" d="M-8 472H8M-8 482H8M-5 469V485M5 469V485"/><path d="M2 484L7 478V484Z" fill="#555"/>
<path d="M-7 493H3L7 498V505H-7Z" fill="#f0f0f0" stroke="#555"/><circle cy="499" r="3.5" fill="#f8f8f8" stroke="#333"/>
<rect x="-7" y="514" width="15" height="15" fill="#f0f0f0" stroke="#555"/><rect x="-7" y="514" width="15" height="4" fill="#888"/><path d="M-7 522H8M-7 526H8M-2 518V529M3 518V529" stroke="#aaa"/>
<text x="0" y="552" text-anchor="middle" font-size="21" fill="#333" stroke="#333" stroke-width=".4">A</text>
<circle cx="-4.5" cy="560" r="3" fill="#6aa84f" stroke="#3a6a20"/><circle cx="4.5" cy="569.5" r="3" fill="#6fb7e8" stroke="#1e7ad0"/><path d="M0 560H3V564" stroke="#111" fill="none"/>
</g>

<!-- right toolbar -->
<rect x="1573.5" y="130.5" width="23.5" height="379" fill="#e9e9e9" stroke="#333"/>
<rect x="1573.5" y="130.5" width="23.5" height="6" fill="#777" stroke="#333"/>
<path d="M1577 133H1594" stroke="#222" stroke-width="3" stroke-dasharray="1 1"/>
<rect x="1573.5" y="511.5" width="23.5" height="146.5" fill="#e9e9e9" stroke="#333"/>
<rect x="1573.5" y="511.5" width="23.5" height="7" fill="#777" stroke="#333"/>
<path d="M1577 515H1594" stroke="#222" stroke-width="3" stroke-dasharray="1 1"/>
<g transform="translate(1585 0)">
<path d="M-4 151L7 140" stroke="#c98b3a" stroke-width="4"/><circle cx="-5" cy="152" r="2.5" fill="#c0451c"/><path d="M-8 155H8" stroke="#333"/>
<circle cx="-5" cy="164" r="3" class="i"/><path class="i" d="M0 164H6V168"/><circle cx="2" cy="172" r="3" fill="none" stroke="#2a6fcb"/><circle cx="5" cy="175" r="3" fill="none" stroke="#2a6fcb"/>
<path d="M-1 184V200M-3 186L-8 198H-3ZM1 186L6 198H1Z" stroke="#333" fill="none"/><path d="M1 186L6 198H1Z" fill="#bcd"/>
<path d="M-8 216C-8 212-3 213-3 212C-3 206 3 206 3 212C3 213 8 213 8 216V217H-8Z M-8 217C-8 220-6 221-4 221H8" fill="#d8e6f0" stroke="#333"/>
<g fill="none" stroke="#444"><rect x="-7" y="228" width="6" height="6"/><rect x="1" y="228" width="6" height="6" stroke="#2a6fcb"/><rect x="-7" y="236" width="6" height="6" stroke="#2a6fcb"/><rect x="1" y="236" width="6" height="6" stroke="#2a6fcb"/></g>
<path d="M0 249L3 253H-3ZM0 265L3 261H-3ZM-8 257L-4 254V260ZM8 257L4 254V260Z" fill="#333"/><rect x="-2" y="255" width="4" height="4" fill="none" stroke="#333"/>
<circle cy="280" r="6.5" fill="none" stroke="#444" stroke-width="1.4"/><path d="M-2 272L2 275L-2 278Z" fill="#333"/>
<rect x="-7" y="294" width="14" height="14" fill="#bcd" stroke="#2a6fcb"/><rect x="-7" y="301" width="8" height="8" fill="#f4f4f4" stroke="#333"/>
<path d="M-7 316H5L7 330H-7Z" fill="#dde" stroke="#2a6fcb"/><path d="M-7 316V330" stroke="#333"/><path d="M-3 323H3M1 321L3 323L1 325" stroke="#111" fill="none"/>
<path d="M-7 347L-2 344H7" stroke="#2a6fcb" stroke-dasharray="2 1" fill="none"/><path d="M-3 351L3 339" stroke="#2a6fcb" fill="none"/>
<path d="M-8 366H0" stroke="#111"/><path d="M0 366H8" stroke="#2a6fcb" stroke-dasharray="2 1"/><path d="M1 372L7 360" stroke="#2a6fcb"/>
<path d="M-7 386L7 384V395H-7Z" fill="#f4f4f4" stroke="#444"/><rect x="2" y="382" width="3" height="3" fill="#2a6fcb"/>
<rect x="-7" y="405" width="14" height="12" fill="#f4f4f4" stroke="#444"/><rect x="-5" y="404" width="3" height="3" fill="#2a6fcb"/><rect x="2" y="404" width="3" height="3" fill="#2a6fcb"/>
<path d="M-7 432H-2M2 432H7M-2 429V435M2 429V435" stroke="#2a6fcb"/>
<path d="M-7 452L7 447V462H-7Z" fill="#eee" stroke="#444"/><path d="M-7 452L7 447" stroke="#2a6fcb"/>
<path d="M-7 484V477C-7 471 1 470 7 470V484Z" fill="#eee" stroke="#444"/><path d="M-7 477C-7 471 1 470 7 470" stroke="#2a6fcb" fill="none"/>
<g fill="none" stroke="#2a6fcb"><path d="M-7 496L1 494L7 491V501L1 504H-7Z"/><rect x="-3" y="496" width="6" height="8"/></g>
<g fill="#f4f4f4" stroke="#444"><rect x="-7" y="523" width="11" height="8"/><rect x="-3" y="527" width="11" height="8"/><rect x="-3" y="527" width="7" height="4" fill="#9aa"/>
<rect x="-7" y="545" width="11" height="8"/><rect x="-3" y="549" width="11" height="8"/><rect x="-3" y="549" width="7" height="4" fill="#9aa"/>
<rect x="-7" y="568" width="11" height="8"/><rect x="-3" y="572" width="11" height="8" style="fill:#999"/>
<rect x="-7" y="590" width="11" height="8"/><rect x="-3" y="594" width="11" height="8" style="fill:#999"/></g>
<path d="M-9 610.5H9" stroke="#aaa"/>
<text x="0" y="626" text-anchor="middle" font-size="7.5" font-family="Liberation Mono" fill="#222" font-weight="bold">ABC</text><path class="i" d="M-4 628H7V635H-4Z"/><rect x="5" y="630" width="3" height="3" fill="#111"/>
<rect x="-7" y="640" width="12" height="8" fill="#999" stroke="#444"/><path d="M-2 652L8 652M7 642V652" stroke="#555" stroke-dasharray="2 1"/>
</g>

<!-- tabs bar -->
<rect x="30" y="758" width="1538" height="17.5" fill="#efefef"/>
<path d="M30 758H1568M30 775H1568" stroke="#d4d4d4"/>
<path d="M30 758V776" stroke="#bbb"/>
<g fill="#f4f4f4" stroke="#aaa"><rect x="33.5" y="761.5" width="12" height="13"/><rect x="46.5" y="761.5" width="14" height="13"/><rect x="61.5" y="761.5" width="14" height="13"/><rect x="76.5" y="761.5" width="14" height="13"/></g>
<path d="M37 765V771M42 765L38 768L42 771ZM56 765L52 768L56 771ZM65 765L69 768L65 771ZM81 765L85 768L81 771ZM87 765V771" stroke="#555" fill="#555"/>
<path d="M92 758H144L138 773H97Z" fill="#000"/>
<text x="104" y="770" fill="#fff" font-size="12" textLength="28" lengthAdjust="spacingAndGlyphs">Model</text>
<text x="149" y="770" fill="#222" font-size="12" textLength="37" lengthAdjust="spacingAndGlyphs">Layout1</text>
<text x="204" y="770" fill="#222" font-size="12" textLength="38" lengthAdjust="spacingAndGlyphs">Layout2</text>
<path d="M143 760L140 773H147M199 758L195 773M253 758L249 773" fill="none" stroke="#555"/>
<rect x="1032.5" y="760.5" width="4" height="13" fill="#fff" stroke="#bbb"/>
<path d="M1048 765V771L1044 768ZM1539 765V771L1543 768Z" fill="#333"/>
<rect x="1056.5" y="759.5" width="14" height="14" rx="1" fill="#d6d6d6" stroke="#aaa"/>

<!-- command -->
<rect x="0" y="780" width="16" height="58" fill="#a4a4a4"/>
<path d="M2 784H14" stroke="#222" stroke-width="3" stroke-dasharray="1 1"/>
<rect x="16" y="780" width="1584" height="58" fill="#fff"/>
<path d="M16 819H1585" stroke="#aaa"/>
<text class="c" x="17" y="792">Command: _plot</text>
<text class="c" x="17" y="808">Specify window for printing</text>
<text class="c" x="17" y="834">Specify first corner:</text>
<rect x="1585" y="780" width="15" height="58" fill="#f0f0f0"/>
<path d="M1588 797H1596L1592 793ZM1588 808H1596L1592 812Z" fill="#333"/>
<rect x="1517" y="820" width="68" height="18" fill="#efefef"/>
<path d="M1527 825V833L1523 829ZM1572 825V833L1576 829Z" fill="#333"/>
<rect x="1535" y="821" width="14" height="16" fill="#d6d6d6" stroke="#aaa"/>

<!-- status bar -->
<rect x="0" y="838" width="1600" height="1.5" fill="#111"/>
<rect x="0" y="839.5" width="1600" height="20.5" fill="url(#st)"/>
<rect x="0" y="860" width="1600" height="4" fill="#1c2b38"/>
<rect x="122" y="862" width="50" height="2" fill="#8a969e"/><rect x="430" y="862" width="60" height="2" fill="#7e8a92"/>
<text x="13" y="855" fill="#111" font-size="12" textLength="161" lengthAdjust="spacingAndGlyphs">-19069.4248, 17097.5807, 0.0000</text>
<g stroke="#666">
<rect x="197" y="839.5" width="22" height="20.5" fill="url(#off)"/><rect x="219" y="839.5" width="22" height="20.5" fill="url(#off)"/><rect x="241" y="839.5" width="22" height="20.5" fill="url(#off)"/><rect x="263" y="839.5" width="22" height="20.5" fill="url(#on)"/><rect x="285" y="839.5" width="22" height="20.5" fill="url(#off)"/><rect x="307" y="839.5" width="22" height="20.5" fill="url(#on)"/><rect x="329" y="839.5" width="22" height="20.5" fill="url(#off)"/><rect x="351" y="839.5" width="22" height="20.5" fill="url(#on)"/><rect x="373" y="839.5" width="22" height="20.5" fill="url(#off)"/><rect x="395" y="839.5" width="22" height="20.5" fill="url(#on)"/><rect x="417" y="839.5" width="22" height="20.5" fill="url(#off)"/><rect x="439" y="839.5" width="22" height="20.5" fill="url(#on)"/><rect x="461" y="839.5" width="22" height="20.5" fill="url(#off)"/><rect x="483" y="839.5" width="22" height="20.5" fill="url(#on)"/>
</g>
<g fill="none" stroke="#222">
<path d="M202 848H212M207 843V853"/><rect x="204" y="845" width="6" height="6"/><rect x="210" y="853" width="3" height="3" stroke="#c0392b"/>
<path d="M224 847H236M224 851H236M224 855H236" stroke-dasharray="1 2"/>
<rect x="244" y="842" width="15" height="15"/><path d="M244 846H259M244 850H259M244 854H259M248 842V857M252 842V857M256 842V857"/>
<path d="M266 844V856H281"/>
<circle cx="294" cy="851" r="5" stroke="#555"/><path d="M293 851L302 844M293 851H302"/>
<rect x="312" y="843" width="13" height="14" fill="#fff" rx="1"/><circle cx="311" cy="843" r="2" stroke="#e25c1a" fill="#fff"/>
<path d="M336 843H348V854H334V846Z" fill="#f4f4f4"/><circle cx="334" cy="856" r="2" stroke="#e25c1a" fill="#fff"/>
<path d="M356 856H370M356 856L367 845"/>
<path d="M378 843V857H392M378 857L388 847"/><path d="M387 842L391 847L388 847L391 851" stroke="#e8a21c" stroke-width="2"/>
<path d="M400 850H410M403 846V854" stroke-width="2"/><rect x="406" y="851" width="7" height="4"/>
<path d="M422 850H436M428 844V857" stroke-width="3"/>
<rect x="442" y="842" width="16" height="15" fill="#8cb8dd" stroke="#1f6fc4" stroke-width="1.5"/>
<path d="M442 846H458M442 850H458M442 854H458" stroke="#dbeaf6" stroke-dasharray="2 2"/>
<rect x="467" y="843" width="10" height="14" rx="1"/><path d="M469 846H475M469 849H475M469 852H475" stroke-width="2" stroke-dasharray="1 1"/>
<path d="M486 845H494M490 841V849"/><rect x="492" y="848" width="10" height="10" fill="#7bb661" stroke="#2f6d1f"/>
</g>
<rect x="1247" y="839.5" width="44" height="20.5" fill="#8a8a8a"/>
<text x="1249" y="855" fill="#111" font-size="12.5" textLength="40" lengthAdjust="spacingAndGlyphs">MODEL</text>
<rect x="1291" y="839.5" width="22" height="20.5" fill="url(#off)" stroke="#666"/><rect x="1313" y="839.5" width="22" height="20.5" fill="url(#off)" stroke="#666"/>
<path d="M1295 843H1307V855H1295Z" fill="#f4f4f4" stroke="#333"/><path d="M1298 853V845L1304 853Z" fill="none" stroke="#333"/><path d="M1293 857H1309" stroke="#333" stroke-width="2"/>
<rect x="1316" y="842" width="7" height="9" fill="#f4f4f4" stroke="#333"/><rect x="1325" y="842" width="7" height="9" fill="#f4f4f4" stroke="#333"/><path d="M1315 856H1333" stroke="#333" stroke-width="2"/>
<rect x="1346" y="839.5" width="48" height="20.5" fill="url(#off)" stroke="#666"/>
<rect x="1397" y="839.5" width="22" height="20.5" fill="url(#off)" stroke="#666"/><rect x="1419" y="839.5" width="22" height="20.5" fill="url(#off)" stroke="#666"/>
<path d="M1357 842L1360 851L1366 856L1358 854L1350 856L1355 851Z" fill="#f4f4f4" stroke="#333"/>
<text x="1368" y="855" fill="#111" font-size="12.5" textLength="14" lengthAdjust="spacingAndGlyphs">1:1</text>
<path d="M1385 848H1393L1389 853Z" fill="#111"/>
<path d="M1408 842L1411 851L1416 856L1408 854L1400 856L1405 851Z" fill="#f4f4f4" stroke="#333"/><circle cx="1413" cy="851" r="3" fill="#f5b52e" stroke="#b5651d"/>
<path d="M1430 842L1433 851L1438 856L1430 854L1422 856L1427 851Z" fill="#b0b0b0" stroke="#777"/>
<rect x="1448" y="839.5" width="22" height="20.5" fill="url(#off)" stroke="#666"/><rect x="1470" y="839.5" width="22" height="20.5" fill="url(#off)" stroke="#666"/><rect x="1492" y="839.5" width="22" height="20.5" fill="url(#off)" stroke="#666"/>
<rect x="1514" y="841" width="46" height="18" fill="#8a8a8a"/><rect x="1538" y="841" width="22" height="18" fill="#bdbdbd"/>
<use href="#gear" x="1458" y="850"/><rect x="1462" y="853" width="4" height="4" fill="#111"/>
<rect x="1473" y="849" width="11" height="9" fill="#e8e8e8" stroke="#222"/><path d="M1480 849V845C1480 842 1486 842 1486 845V848" stroke="#222" fill="none" stroke-width="1.4"/>
<rect x="1495" y="844" width="13" height="9" fill="#ccc" stroke="#222"/><circle cx="1508" cy="852" r="3" fill="#f5b52e" stroke="#b5651d"/>
<rect x="1520" y="844" width="12" height="10" fill="#f2c230" stroke="#555"/><rect x="1524" y="841" width="8" height="7" fill="#4468a8"/><path d="M1527 855L1530 858L1536 850" stroke="#2d8a1e" stroke-width="2" fill="none"/>
<path d="M1543 856C1542 852 1541 851 1541 848C1541 843 1552 843 1552 848C1552 851 1551 852 1550 856Z" fill="#f6e5a0" stroke="#999"/>
<path d="M1568 849H1576L1572 854Z" fill="#111"/>
<rect x="1581" y="842" width="15" height="15" fill="#f4f4f4" stroke="#222"/><path d="M1581 846H1596" stroke="#222"/>
</svg>
</body></html>
